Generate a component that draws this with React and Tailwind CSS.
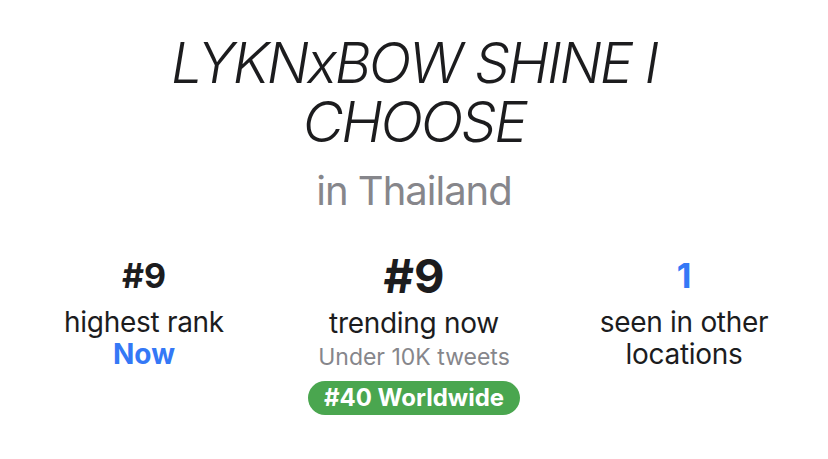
export default function App() {
  return (
    <div className="w-[828px] h-[459px] bg-white flex flex-col items-center" style={{ fontFamily: "Inter, 'Noto Sans', sans-serif" }}>
      <h1 className="mt-[34px] w-[560px] text-center italic font-light text-[56px] leading-[59px] text-[#1c1c1e] tracking-[-2.2px]">
        LYKNxBOW SHINE I CHOOSE
      </h1>
      <p className="mt-[17px] text-[40px] leading-[44px] tracking-[-1px] text-[#86868b]">in Thailand</p>
      <div className="mt-[38px] w-full px-[9px] grid grid-cols-3 text-center text-[#1c1c1e]">
        <div className="flex flex-col items-center">
          <span className="text-[34px] leading-[40px] font-bold mt-[5px]">#9</span>
          <span className="text-[28px] leading-[32px] mt-[10px] tracking-[-0.3px]">highest rank</span>
          <span className="text-[28px] leading-[32px] font-bold text-[#3478f6]">Now</span>
        </div>
        <div className="flex flex-col items-center">
          <span className="text-[47px] leading-[50px] font-bold">#9</span>
          <span className="text-[28px] leading-[32px] mt-[6px] tracking-[-0.3px]">trending now</span>
          <span className="text-[23px] leading-[30px] mt-[3px] text-[#86868b]">Under 10K tweets</span>
          <span className="mt-[9px] rounded-full bg-[#4aa64f] text-white font-bold text-[24px] leading-[34px] px-[16px]">#40 Worldwide</span>
        </div>
        <div className="flex flex-col items-center">
          <span className="text-[34px] leading-[40px] font-bold mt-[5px] text-[#3478f6]">1</span>
          <span className="text-[28px] leading-[32px] mt-[10px] tracking-[-0.3px]">seen in other<br />locations</span>
        </div>
      </div>
    </div>
  );
}
